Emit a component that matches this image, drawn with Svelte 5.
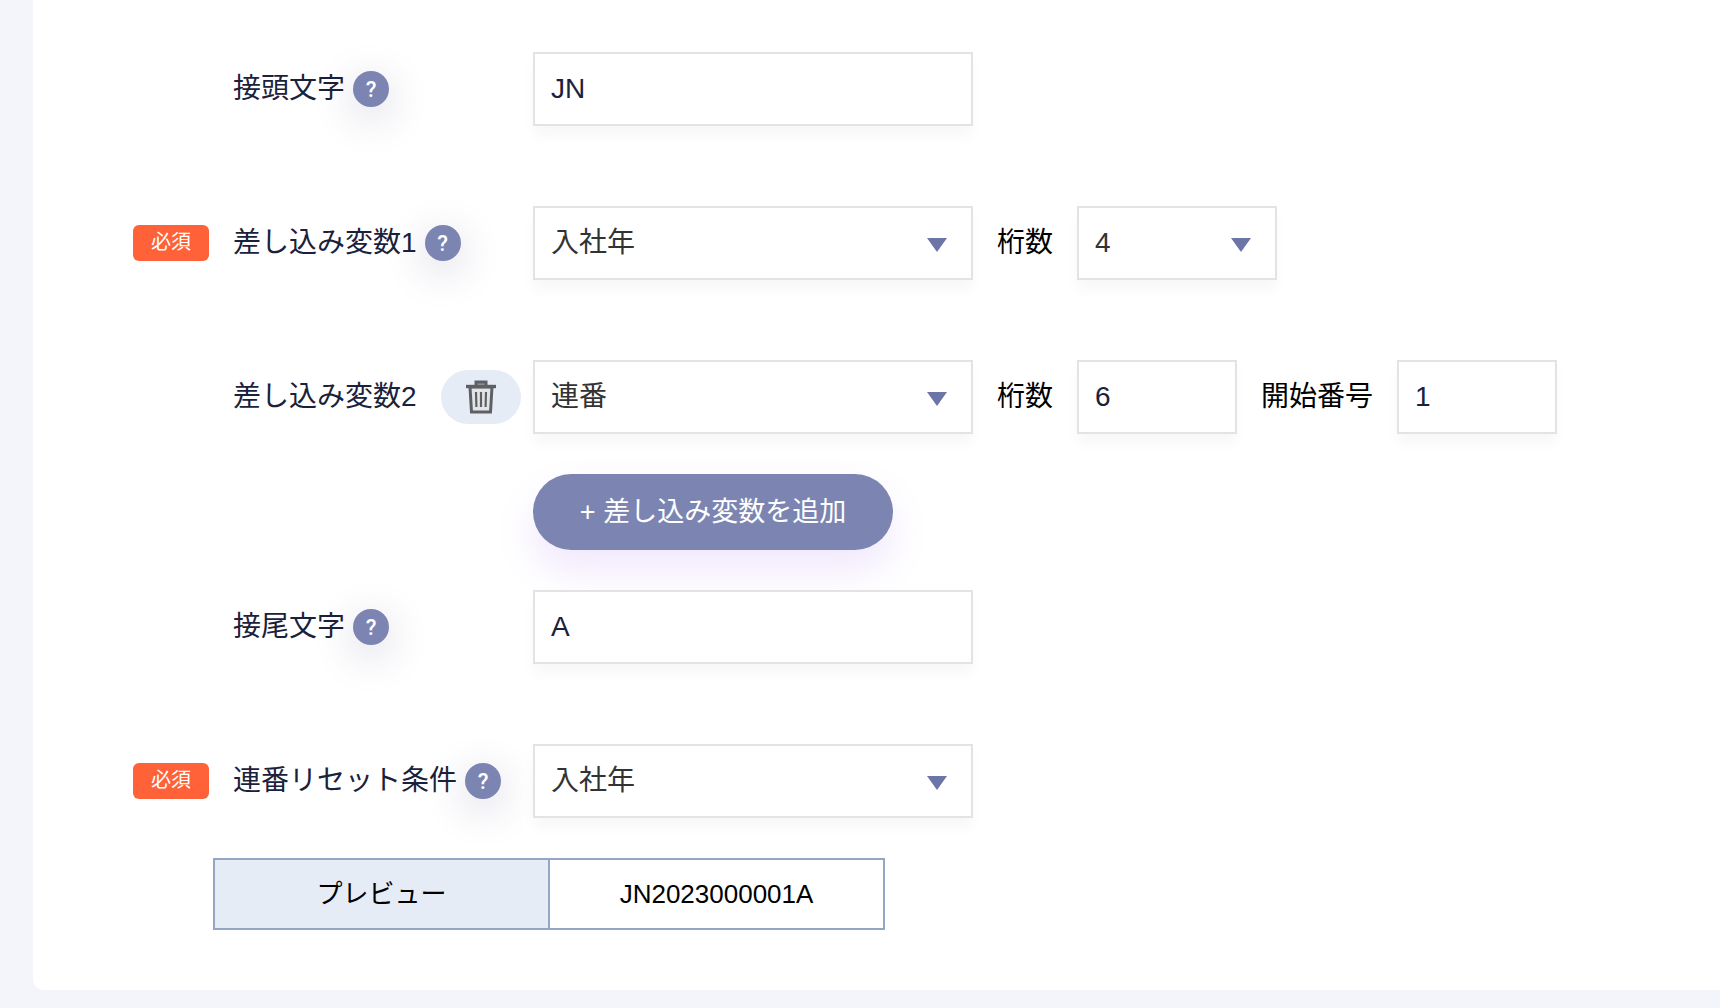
<script lang="ts">
	let prefix = $state('JN');
	let suffix = $state('A');
	let variable1 = $state('入社年');
	let digits1 = $state('4');
	let variable2 = $state('連番');
	let digits2 = $state('6');
	let startNumber = $state('1');
	let resetCondition = $state('入社年');

	const variables = ['入社年', '入社月', '連番'];
	const resetConditions = ['入社年', '入社月'];

	const preview = $derived(
		prefix + '2023'.slice(-Number(digits1)) + startNumber.padStart(Number(digits2), '0') + suffix
	);
</script>

<svelte:head>
	<title>社員番号設定</title>
</svelte:head>

{#snippet help(name: string)}
	<button type="button" class="help" aria-label="{name}の説明">?</button>
{/snippet}

<main class="card">
	<form onsubmit={(e) => e.preventDefault()}>
		<div class="row">
			<div class="row-label">
				<label for="prefix">接頭文字</label>
				{@render help('接頭文字')}
			</div>
			<input id="prefix" class="field" type="text" bind:value={prefix} />
		</div>

		<div class="row">
			<span class="badge">必須</span>
			<div class="row-label">
				<label for="variable1">差し込み変数1</label>
				{@render help('差し込み変数1')}
			</div>
			<div class="fields">
				<div class="select">
					<select id="variable1" class="field" bind:value={variable1}>
						{#each variables as v}<option>{v}</option>{/each}
					</select>
				</div>
				<label class="sub-label" for="digits1">桁数</label>
				<div class="select select-small">
					<select id="digits1" class="field" bind:value={digits1}>
						<option>2</option>
						<option>4</option>
					</select>
				</div>
			</div>
		</div>

		<div class="row row-tight">
			<div class="row-label">
				<label for="variable2">差し込み変数2</label>
				<button type="button" class="delete" aria-label="差し込み変数2を削除">
					<svg width="32" height="36" viewBox="0 0 32 36" fill="none" stroke="#5e6066">
						<path d="M5 8 L6.5 33 H25.5 L27 8 Z" fill="#e3e4e6" stroke-width="3" />
						<path d="M11 6 V3 H21 V6" fill="#96989c" stroke-width="3" />
						<path d="M1 7.5 H31" stroke-width="3.4" />
						<path d="M11 13 L11.4 28 M16 13 V28 M21 13 L20.6 28" stroke-width="2.2" />
					</svg>
				</button>
			</div>
			<div class="fields">
				<div class="select">
					<select id="variable2" class="field" bind:value={variable2}>
						{#each variables as v}<option>{v}</option>{/each}
					</select>
				</div>
				<label class="sub-label" for="digits2">桁数</label>
				<input id="digits2" class="field field-small" type="text" bind:value={digits2} />
				<label class="sub-label" for="start">開始番号</label>
				<input id="start" class="field field-small" type="text" bind:value={startNumber} />
			</div>
		</div>

		<div class="row row-tight">
			<button type="button" class="add">+ 差し込み変数を追加</button>
		</div>

		<div class="row">
			<div class="row-label">
				<label for="suffix">接尾文字</label>
				{@render help('接尾文字')}
			</div>
			<input id="suffix" class="field" type="text" bind:value={suffix} />
		</div>

		<div class="row row-tight">
			<span class="badge">必須</span>
			<div class="row-label">
				<label for="reset">連番リセット条件</label>
				{@render help('連番リセット条件')}
			</div>
			<div class="select">
				<select id="reset" class="field" bind:value={resetCondition}>
					{#each resetConditions as c}<option>{c}</option>{/each}
				</select>
			</div>
		</div>
	</form>

	<table class="preview">
		<tbody>
			<tr>
				<th scope="row">プレビュー</th>
				<td>{preview}</td>
			</tr>
		</tbody>
	</table>
</main>

<style>
	:global(body) {
		background: #f4f5fa;
		font-family: 'Liberation Sans', 'Noto Sans CJK JP', sans-serif;
	}

	.card {
		box-sizing: border-box;
		margin: 0 0 18px 33px;
		padding: 52px 0 60px 100px;
		background: #fff;
		border-radius: 0 0 0 10px;
		color: #1a213a;
		font-size: 28px;
	}

	.row {
		display: grid;
		grid-template-columns: 100px 300px 1fr;
		align-items: center;
		margin-bottom: 80px;
	}

	.row-tight {
		margin-bottom: 40px;
	}

	.row-label {
		grid-column: 2;
		display: flex;
		align-items: center;
		gap: 8px;
		line-height: 36px;
		white-space: nowrap;
	}

	.badge {
		width: 76px;
		padding-bottom: 2px;
		border-radius: 6px;
		background: #ff6138;
		color: #fff;
		font-size: 20px;
		line-height: 34px;
		text-align: center;
	}

	.help {
		width: 36px;
		height: 36px;
		padding: 2px 0 0;
		border: none;
		border-radius: 50%;
		background: #7c85b1;
		box-shadow: 0 10px 40px rgba(60, 50, 110, 0.22);
		color: #fff;
		font: 500 22px/34px Roboto, sans-serif;
		cursor: pointer;
	}

	.delete {
		display: flex;
		align-items: center;
		justify-content: center;
		width: 80px;
		height: 54px;
		margin-left: 16px;
		padding: 0;
		border: none;
		border-radius: 27px;
		background: #e6ecf6;
		cursor: pointer;
	}

	.fields {
		display: flex;
		align-items: center;
		gap: 24px;
	}

	.field {
		box-sizing: border-box;
		width: 440px;
		height: 74px;
		padding: 0 16px;
		border: 2px solid #e3e3e3;
		border-radius: 0;
		background: #fff;
		box-shadow: 0 10px 12px rgba(0, 0, 0, 0.03);
		color: #1a213a;
		font-family: inherit;
		font-size: 28px;
	}

	.field-small {
		width: 160px;
	}

	.select {
		position: relative;
		width: 440px;
	}

	.select-small {
		width: 200px;
	}

	.select .field {
		display: block;
		width: 100%;
		padding-bottom: 2px;
		appearance: none;
		color: #333;
	}

	.select::after {
		content: '';
		position: absolute;
		top: 32px;
		right: 26px;
		border: 10px solid transparent;
		border-top: 14px solid #6b75a6;
		border-bottom: none;
		pointer-events: none;
	}

	.sub-label {
		color: #000;
		line-height: 36px;
		white-space: nowrap;
	}

	.add {
		grid-column: 3;
		width: 360px;
		height: 76px;
		padding: 0;
		border: none;
		border-radius: 38px;
		background: #7c85b1;
		box-shadow: 0 20px 40px rgba(130, 60, 230, 0.12);
		color: #fff;
		font-family: inherit;
		font-size: 27px;
		line-height: 36px;
		cursor: pointer;
	}

	.preview {
		width: 672px;
		height: 72px;
		margin-left: 80px;
		border-collapse: collapse;
		table-layout: fixed;
		color: #000;
		font-size: 26px;
		line-height: 36px;
	}

	.preview th,
	.preview td {
		padding: 0;
		border: 2px solid #94a5c6;
		font-weight: 400;
		text-align: center;
	}

	.preview th {
		background: #e6ecf6;
	}
</style>
